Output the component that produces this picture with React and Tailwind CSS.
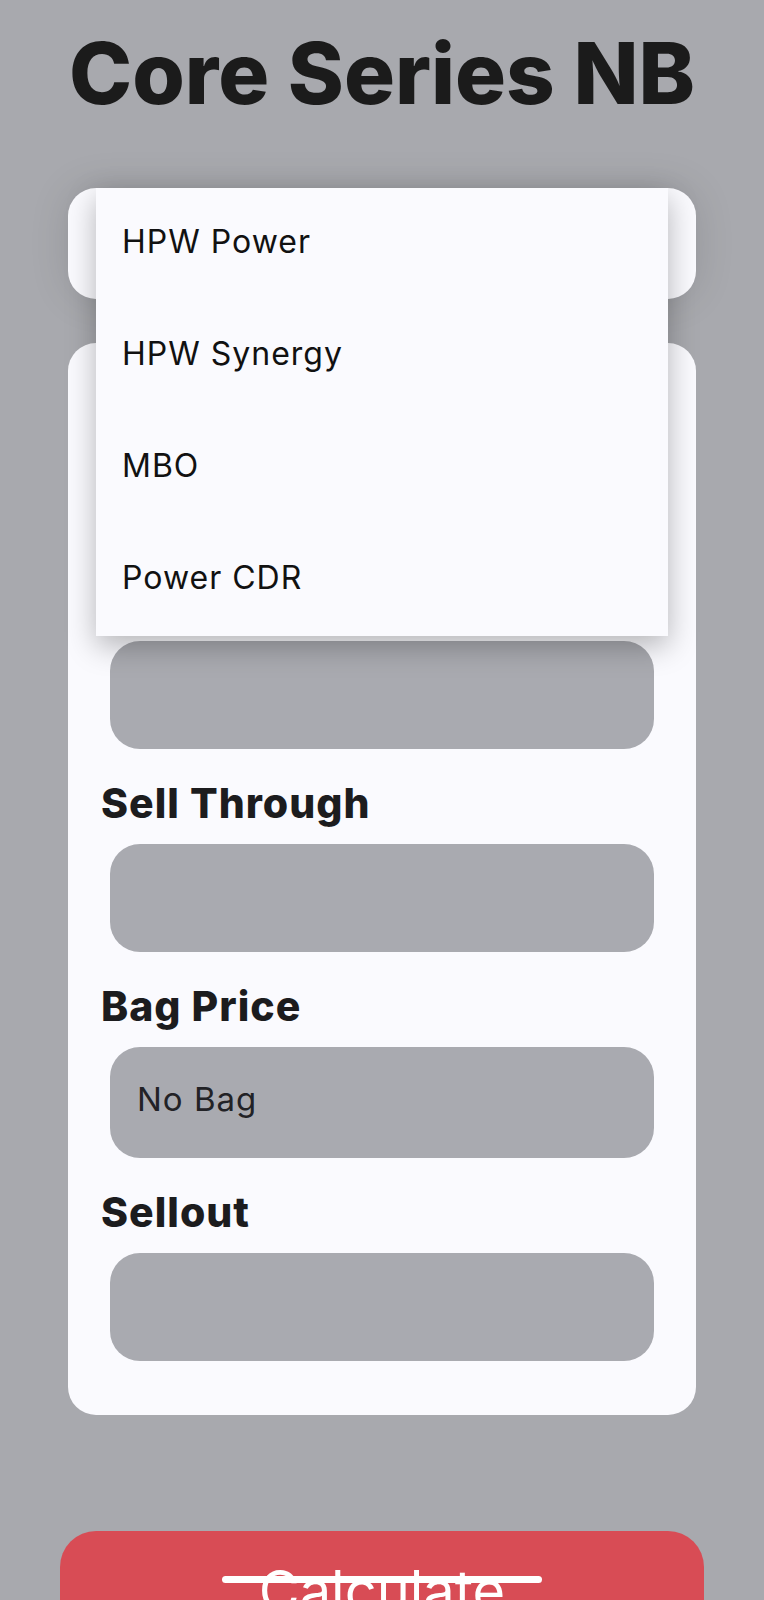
import React from 'react';

const options = ['HPW Power', 'HPW Synergy', 'MBO', 'Power CDR'];

function Field({ label, children, tall }) {
  return (
    <div>
      <div className="h-[95px] pt-[30px] pl-[33px] text-[41px] leading-[48px] font-extrabold tracking-[1px] text-[#1c1c1e]">
        {label}
      </div>
      <div
        className={
          'mx-[42px] rounded-[30px] bg-[#a9aab0] flex items-center pl-[27px] pb-[6px] text-[33px] tracking-[1px] text-[#222226] ' +
          (tall ? 'h-[111px]' : 'h-[108px]')
        }
      >
        {children}
      </div>
    </div>
  );
}

export default function App() {
  return (
    <div className="h-[1600px] overflow-hidden bg-[#a8a9ae] font-['Inter',sans-serif]">
      <h1 className="pt-[24px] text-center text-[85px] leading-[100px] font-extrabold text-[#1b1b1b]">
        Core Series NB
      </h1>

      <div className="relative mx-[68px] mt-[64px] h-[111px] rounded-[28px] bg-[#fafafe] shadow-[0_0_40px_rgba(0,0,0,0.12)]">
        <div className="absolute top-0 left-[28px] right-[28px] z-10 bg-[#fafafe] shadow-[0_10px_28px_rgba(0,0,0,0.28)]">
          {options.map((o) => (
            <div key={o} className="h-[112px] leading-[108px] pl-[26px] text-[32px] tracking-[1px] text-[#111]">
              {o}
            </div>
          ))}
        </div>
      </div>

      <div className="mx-[68px] mt-[44px] pb-[54px] rounded-[28px] bg-[#fafafe]">
        {/* fields under the open menu */}
        <Field />
        <Field />
        <Field label="Sell Through" />
        <Field label="Bag Price" tall>
          No Bag
        </Field>
        <Field label="Sellout" />
      </div>

      <div className="mx-[60px] mt-[116px] h-[120px] rounded-[36px] bg-[#d84c55] pt-[26px] flex justify-center">
        <div className="relative text-[56px] leading-[68px] text-white">
          Calculate
          <span className="absolute top-[19px] left-1/2 -translate-x-1/2 w-[320px] h-[7px] rounded-full bg-white" />
        </div>
      </div>
    </div>
  );
}
